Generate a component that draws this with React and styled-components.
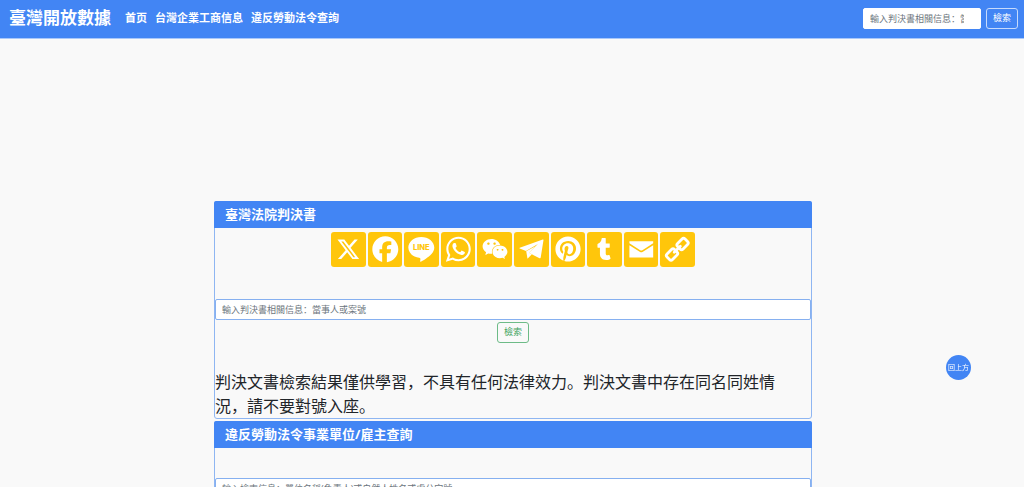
import React from 'react';
import styled, { createGlobalStyle } from 'styled-components';
import { FaWeixin, FaPinterest, FaTumblr } from 'react-icons/fa';

const GlobalStyle = createGlobalStyle`
    * {
        box-sizing: border-box;
    }
    body {
        margin: 0;
        background-color: #f9f9f9;
        color: #212529;
        font-family: "Open Sans", "Noto Sans CJK SC", "Noto Sans CJK TC", sans-serif;
        font-size: 16px;
        line-height: 24px;
    }
    button, input {
        font-family: inherit;
    }
`;

const Navbar = styled.header`
    display: flex;
    align-items: center;
    min-height: 39px;
    padding: 0 6px 2px 9px;
    background-color: #4285f4;
    border-bottom: 1px solid #a9c8fa;
`;

const Brand = styled.a`
    margin-right: 14px;
    color: #fff;
    font-size: 17px;
    font-weight: 700;
    text-decoration: none;
    white-space: nowrap;
`;

const NavLinks = styled.nav`
    display: flex;
    flex: 1;
    gap: 8px;
`;

const NavLink = styled.a`
    color: #fff;
    font-size: 11px;
    font-weight: 700;
    text-decoration: none;
    white-space: nowrap;
`;

const NavSearch = styled.form`
    display: flex;
    gap: 5px;
`;

const TextInput = styled.input`
    width: ${props => props.$width || '100%'};
    height: 21px;
    padding: 0 6px;
    border: 1px solid ${props => (props.$width ? '#fff' : '#86b0f0')};
    border-radius: 2px;
    background-color: #fff;
    color: #212529;
    font-size: 9px;
    &::placeholder {
        color: #6c757d;
        opacity: 1;
    }
`;

const Button = styled.button`
    height: 21px;
    padding: 0 6px;
    border: 1px solid ${props => props.$border};
    border-radius: 3px;
    background: none;
    color: ${props => props.$color};
    font-size: 9px;
    line-height: 18px;
    white-space: nowrap;
    cursor: pointer;
`;

const Main = styled.main`
    display: flex;
    flex-direction: column;
    align-items: center;
    gap: 2px;
    padding: 162px 0 0 2px;
`;

const Card = styled.section`
    width: 58.5%;
    border: 1px solid #8fb6f2;
    border-radius: 3px;
`;

const CardHeader = styled.h2`
    margin: -1px -1px 0;
    padding: 0 11px;
    border-radius: 2px 2px 0 0;
    background-color: #4285f4;
    color: #fff;
    font-size: 13px;
    font-weight: 700;
    line-height: 27px;
`;

const ShareList = styled.div`
    display: flex;
    gap: 2px;
    max-width: 364px;
    margin: 0 auto;
    padding: 4px 0 32px;
`;

const ShareTile = styled.a`
    display: flex;
    flex: 1;
    align-items: center;
    justify-content: center;
    aspect-ratio: 1;
    border-radius: 3px;
    background-color: #ffc60b;
    color: #fff;
    svg {
        width: ${props => props.$size || '100%'};
        height: ${props => props.$size || '100%'};
    }
`;

const SearchForm = styled.form`
    display: flex;
    flex-direction: column;
    align-items: center;
    gap: 2px;
    margin-top: ${props => props.$top || '0'};
`;

const Notice = styled.p`
    margin: 0;
    padding: 27px 16px 0 0;
`;

const BackToTop = styled.button`
    position: fixed;
    right: 53px;
    bottom: 107px;
    width: 25px;
    height: 25px;
    padding: 0;
    border: 0;
    border-radius: 50%;
    background-color: #4285f4;
    color: #fff;
    font-size: 7px;
    line-height: 25px;
    white-space: nowrap;
    cursor: pointer;
`;

function XIcon() {
    return (
        <svg viewBox="0 0 32 32" fill="currentColor">
            <path d="M21.751 7h3.067l-6.7 7.658L26 25.078h-6.172l-4.833-6.32-5.531 6.32h-3.07l7.167-8.19L6 7h6.328l4.37 5.777L21.75 7Zm-1.076 16.242h1.7L11.404 8.74H9.58z" />
        </svg>
    );
}

function FacebookIcon() {
    return (
        <svg viewBox="0 0 32 32" fill="currentColor">
            <path d="M28 16c0-6.627-5.373-12-12-12S4 9.373 4 16c0 5.628 3.875 10.35 9.101 11.647v-7.98h-2.474V16H13.1v-1.58c0-4.085 1.849-5.978 5.859-5.978.76 0 2.072.15 2.608.298v3.325c-.283-.03-.775-.045-1.386-.045-1.967 0-2.728.745-2.728 2.683V16h3.92l-.673 3.667h-3.247v8.245C23.395 27.195 28 22.135 28 16" />
        </svg>
    );
}

function LineIcon() {
    return (
        <svg viewBox="0 0 32 32" fill="currentColor">
            <path d="M28 14.304c0-5.37-5.384-9.738-12-9.738S4 8.936 4 14.304c0 4.814 4.27 8.846 10.035 9.608.391.084.923.258 1.058.592.122.303.08.778.039 1.085l-.171 1.028c-.053.303-.242 1.186 1.039.647 1.281-.54 6.911-4.069 9.428-6.967C27.167 18.39 28 16.446 28 14.304" />
            <text x="16" y="17" textAnchor="middle" fill="#ffc60b" fontFamily="Inter, sans-serif" fontSize="7" fontWeight="800">LINE</text>
        </svg>
    );
}

function WhatsAppIcon() {
    return (
        <svg viewBox="0 0 32 32" fill="currentColor">
            <path fillRule="evenodd" d="M16.21 4.41C9.973 4.41 4.917 9.465 4.917 15.7c0 2.134.592 4.13 1.62 5.832L4.5 27.59l6.25-2.002a11.24 11.24 0 0 0 5.46 1.404c6.234 0 11.29-5.055 11.29-11.29 0-6.237-5.056-11.292-11.29-11.292m0 20.69c-1.91 0-3.69-.57-5.173-1.553l-3.61 1.156 1.173-3.49a9.35 9.35 0 0 1-1.79-5.512c0-5.18 4.217-9.4 9.4-9.4s9.397 4.22 9.397 9.4c0 5.188-4.214 9.4-9.398 9.4zm5.293-6.832c-.284-.155-1.673-.906-1.934-1.012-.265-.106-.455-.16-.658.12s-.78.91-.954 1.096c-.176.186-.345.203-.628.048-.282-.154-1.2-.494-2.264-1.517-.83-.795-1.373-1.76-1.53-2.055s0-.445.15-.584c.134-.124.3-.326.45-.488.15-.163.203-.28.306-.47.104-.19.06-.36-.005-.506-.066-.147-.59-1.587-.81-2.173-.218-.586-.46-.498-.63-.505-.168-.007-.358-.038-.55-.045-.19-.007-.51.054-.78.332-.277.274-1.05.943-1.1 2.362-.055 1.418.926 2.826 1.064 3.023.137.2 1.874 3.272 4.76 4.537 2.888 1.264 2.9.878 3.43.85s1.734-.632 2-1.306c.265-.672.287-1.255.222-1.38-.064-.128-.25-.206-.53-.363" />
        </svg>
    );
}

function TelegramIcon() {
    return (
        <svg viewBox="0 0 32 32" fill="currentColor">
            <path d="M26.6 7 5.300 14.500c-.5.200-.5.600 0 .8l5.800 2.300 11-6.600-8.300 8.300 9.800 4.900c.6.300 1 .1 1.100-.5L27.300 7.500c.1-.4-.2-.7-.7-.5z" />
            <path d="m11.300 17.800 1.200 7 4-4.200-2.700-1.300 6-6.200z" />
        </svg>
    );
}

function EmailIcon() {
    return (
        <svg viewBox="0 0 32 32" fill="currentColor">
            <path d="M27 23.500V12.200l-9.900 6.300q-1.100.6-2.200 0L5 12.200v11.300z" />
            <path d="M5 10.500 15 16.900q1 .6 2 0l10-6.400v-2H5z" />
        </svg>
    );
}

function LinkIcon() {
    return (
        <svg viewBox="0 0 32 32" fill="none" stroke="currentColor" strokeWidth="2.600" strokeLinecap="round">
            <g transform="rotate(-45 16 16)">
                <rect x="4.200" y="12.400" width="9.800" height="7.200" rx="2" />
                <rect x="18" y="12.400" width="9.800" height="7.200" rx="2" />
                <path d="M12 16h8" />
            </g>
        </svg>
    );
}

const shares = [
    { name: 'X', icon: <XIcon /> },
    { name: 'Facebook', icon: <FacebookIcon /> },
    { name: 'Line', icon: <LineIcon /> },
    { name: 'WhatsApp', icon: <WhatsAppIcon /> },
    { name: 'WeChat', icon: <FaWeixin />, size: '26px' },
    { name: 'Telegram', icon: <TelegramIcon /> },
    { name: 'Pinterest', icon: <FaPinterest />, size: '26px' },
    { name: 'Tumblr', icon: <FaTumblr />, size: '22px' },
    { name: 'Email', icon: <EmailIcon /> },
    { name: 'Copy Link', icon: <LinkIcon /> },
];

function App() {
    return (
        <>
            <GlobalStyle />
            <Navbar>
                <Brand href="#">臺灣開放數據</Brand>
                <NavLinks>
                    <NavLink href="#">首页</NavLink>
                    <NavLink href="#">台灣企業工商信息</NavLink>
                    <NavLink href="#">違反勞動法令查詢</NavLink>
                </NavLinks>
                <NavSearch>
                    <TextInput
                        $width="118px"
                        type="search"
                        aria-label="檢索"
                        placeholder="輸入判決書相關信息：當事人或案號"
                    />
                    <Button type="button" $border="#c6dafc" $color="#fff">檢索</Button>
                </NavSearch>
            </Navbar>
            <Main>
                <Card>
                    <CardHeader>臺灣法院判決書</CardHeader>
                    <ShareList>
                        {shares.map(share => (
                            <ShareTile key={share.name} href="#" aria-label={share.name} $size={share.size}>
                                {share.icon}
                            </ShareTile>
                        ))}
                    </ShareList>
                    <SearchForm>
                        <TextInput
                            type="search"
                            aria-label="臺灣法院判決書"
                            placeholder="輸入判決書相關信息：當事人或案號"
                        />
                        <Button type="button" $border="#6dbb87" $color="#3fa45f">檢索</Button>
                    </SearchForm>
                    <Notice>
                        判決文書檢索結果僅供學習，不具有任何法律效力。判決文書中存在同名同姓情況，請不要對號入座。
                    </Notice>
                </Card>
                <Card>
                    <CardHeader>違反勞動法令事業單位/雇主查詢</CardHeader>
                    <SearchForm $top="30px">
                        <TextInput
                            type="search"
                            aria-label="違反勞動法令事業單位/雇主查詢"
                            placeholder="輸入檢索信息：單位名稱(負責人)或自然人姓名或處分字號"
                        />
                        <Button type="button" $border="#6dbb87" $color="#3fa45f">檢索</Button>
                    </SearchForm>
                </Card>
            </Main>
            <BackToTop type="button">回上方</BackToTop>
        </>
    );
}

export default App;
